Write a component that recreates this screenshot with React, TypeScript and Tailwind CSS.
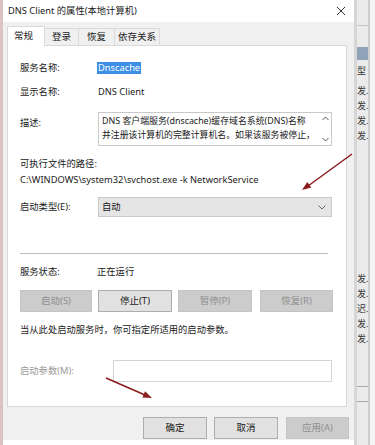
import React from "react";

const font = "[font-family:'Noto_Sans','Noto_Sans_CJK_SC',sans-serif]";

function Tab({ label, active, w }: { label: string; active?: boolean; w: string }) {
  return active ? (
    <div className={`${w} h-[20px] bg-white border border-b-0 border-[#d9d9d9] flex items-center pl-[6px] text-[9.5px] text-[#1a1a1a] relative z-10 -mb-px`}>
      {label}
    </div>
  ) : (
    <div className={`${w} h-[17px] bg-[#f0f0f0] border border-b-0 border-l-0 border-[#d9d9d9] flex items-center justify-center text-[9.5px] text-[#1a1a1a]`}>
      {label}
    </div>
  );
}

function Btn({ label, disabled, w, extra }: { label: string; disabled?: boolean; w: string; extra?: string }) {
  return (
    <div
      className={`${w} shrink-0 h-[22px] flex items-center justify-center text-[9.5px] border ${
        disabled
          ? "bg-[#cccccc] border-[#c4c4c4] text-[#8f8f8f]"
          : "bg-[#e1e1e1] border-[#adadad] text-[#1a1a1a]"
      } ${extra ?? ""}`}
    >
      {label}
    </div>
  );
}

export default function App() {
  return (
    <div className={`w-[375px] h-[445px] flex bg-white overflow-hidden relative ${font}`}>
      {/* left edge of dialog */}
      <div className="w-[3px] h-full bg-[#dcc3bf]" />

      {/* dialog */}
      <div className="w-[351px] h-full flex flex-col">
        {/* title bar */}
        <div className="h-[22px] bg-white flex items-center justify-between pl-[5px] pr-[6px]">
          <span className="text-[9.3px] text-[#1a1a1a] leading-none">DNS Client 的属性(本地计算机)</span>
          <svg width="10" height="10" viewBox="0 0 10 10" className="mr-[2px]">
            <path d="M1 1 L9 9 M9 1 L1 9" stroke="#333" strokeWidth="1" />
          </svg>
        </div>

        {/* gray body */}
        <div className="bg-[#f0f0f0] h-[418px] flex flex-col pl-[4px] pr-[7px]">
          {/* tabs */}
          <div className="h-[23px] flex items-end">
            <Tab label="常规" active w="w-[38px]" />
            <Tab label="登录" w="w-[34px]" />
            <Tab label="恢复" w="w-[36px]" />
            <Tab label="依存关系" w="w-[45px]" />
          </div>

          {/* panel */}
          <div className="h-[362px] bg-white border border-[#d9d9d9] pl-[12px] pr-[14px] flex flex-col text-[9.3px] text-[#1a1a1a]">
            <div className="mt-[15px] h-[14px] flex items-center">
              <span className="w-[77px] shrink-0">服务名称:</span>
              <span className="bg-[#3d8fe6] text-white px-[1px] leading-[12px]">Dnscache</span>
            </div>
            <div className="mt-[10px] h-[14px] flex items-center">
              <span className="w-[78px] shrink-0">显示名称:</span>
              <span>DNS Client</span>
            </div>
            <div className="mt-[13px] h-[34px] flex">
              <span className="w-[78px] shrink-0 pt-[4px] leading-[14px]">描述:</span>
              <div className="flex-1 min-w-0 border border-[#c9c9c9] flex pl-[3px]">
                <div className="flex-1 min-w-0 leading-[14px] pt-[1px] text-[8.9px] whitespace-nowrap overflow-hidden">
                  <div>DNS 客户端服务(dnscache)缓存域名系统(DNS)名称</div>
                  <div>并注册该计算机的完整计算机名。如果该服务被停止，</div>
                </div>
                <div className="w-[12px] shrink-0 flex flex-col items-center justify-between py-[3px]">
                  <svg width="7" height="5" viewBox="0 0 7 5"><path d="M0.5 4 L3.5 1 L6.5 4" stroke="#555" fill="none" /></svg>
                  <svg width="7" height="5" viewBox="0 0 7 5"><path d="M0.5 1 L3.5 4 L6.5 1" stroke="#555" fill="none" /></svg>
                </div>
              </div>
            </div>
            <div className="mt-[11px] h-[14px] flex items-center">可执行文件的路径:</div>
            <div className="mt-[2px] h-[14px] flex items-center">C:\WINDOWS\system32\svchost.exe -k NetworkService</div>
            <div className="mt-[10px] h-[20px] flex items-center">
              <span className="w-[78px] shrink-0">启动类型(E):</span>
              <div className="flex-1 h-full bg-[#e5e5e5] border border-[#cacaca] flex items-center justify-between pl-[3px] pr-[5px]">
                <span>自动</span>
                <svg width="8" height="5" viewBox="0 0 8 5"><path d="M0.5 0.5 L4 4 L7.5 0.5" stroke="#666" fill="none" /></svg>
              </div>
            </div>
            <div className="mt-[36px] h-px bg-[#bdbdbd] mr-[4px]" />
            <div className="mt-[11px] h-[14px] flex items-center">
              <span className="w-[77px] shrink-0">服务状态:</span>
              <span>正在运行</span>
            </div>
            <div className="mt-[11px] flex">
              <Btn label="启动(S)" disabled w="w-[72px]" />
              <Btn label="停止(T)" w="w-[74px]" extra="ml-[6px]" />
              <Btn label="暂停(P)" disabled w="w-[74px]" extra="ml-[6px]" />
              <Btn label="恢复(R)" disabled w="w-[73px]" extra="ml-[8px]" />
            </div>
            <div className="mt-[11px] h-[14px] flex items-center">当从此处启动服务时，你可指定所适用的启动参数。</div>
            <div className="mt-[23px] h-[22px] flex items-center">
              <span className="w-[93px] shrink-0 text-[#9a9a9a]">启动参数(M):</span>
              <div className="flex-1 h-full bg-white border border-[#d4d4d4]" />
            </div>
          </div>

          {/* bottom buttons */}
          <div className="mt-[10px] flex justify-end">
            <Btn label="确定" w="w-[64px]" extra="border-[#0078d7] border-[1.5px]" />
            <Btn label="取消" w="w-[64px]" extra="ml-[7px]" />
            <Btn label="应用(A)" disabled w="w-[63px]" extra="ml-[8px] mr-[-2px]" />
          </div>
        </div>
        <div className="flex-1 bg-white" />
      </div>

      {/* dialog right border */}
      <div className="w-[3px] h-full bg-[#d6d6d6]" />

      {/* background window strip */}
      <div className="w-[11px] h-full bg-[#ebebeb] flex flex-col text-[9px] text-[#333] leading-none relative">
        <div className="mt-[25px] h-px bg-[#c8c8c8]" />
        <div className="mt-[21px] h-[13px] bg-[#8fa3b8]" />
        <div className="mt-[3px] flex flex-col">
          <span className="h-[15px] flex items-center">型</span>
          <span className="mt-[5px] h-[15px] flex items-center">发.</span>
          <span className="h-[15px] flex items-center">发.</span>
          <span className="h-[15px] flex items-center">发.</span>
          <span className="h-[15px] flex items-center">发.</span>
        </div>
        <div className="mt-[128px] flex flex-col">
          <span className="h-[15px] flex items-center">发.</span>
          <span className="h-[15px] flex items-center">发.</span>
          <span className="h-[15px] flex items-center">迟.</span>
          <span className="h-[15px] flex items-center">发.</span>
          <span className="h-[15px] flex items-center">发.</span>
        </div>
        <div className="mt-[40px] h-px bg-[#a8a8a8]" />
        <div className="mt-[14px] h-px bg-[#a8a8a8]" />
      </div>
      <div className="w-[2px] h-full bg-[#cfcfcf]" />
      <div className="flex-1 h-full bg-[#f4f4f4]" />

      {/* annotation arrows */}
      <svg className="absolute inset-0 pointer-events-none" width="375" height="445" viewBox="0 0 375 445">
        <line x1="352" y1="154" x2="308" y2="186" stroke="#8b1c1c" strokeWidth="1.4" />
        <polygon points="302,190 311.3,187.5 307.3,181.9" fill="#8b1c1c" />
        <line x1="106" y1="378" x2="145" y2="395" stroke="#8b1c1c" strokeWidth="1.6" />
        <polygon points="152,398 142.4,397.6 145.1,391.2" fill="#8b1c1c" />
      </svg>
    </div>
  );
}
